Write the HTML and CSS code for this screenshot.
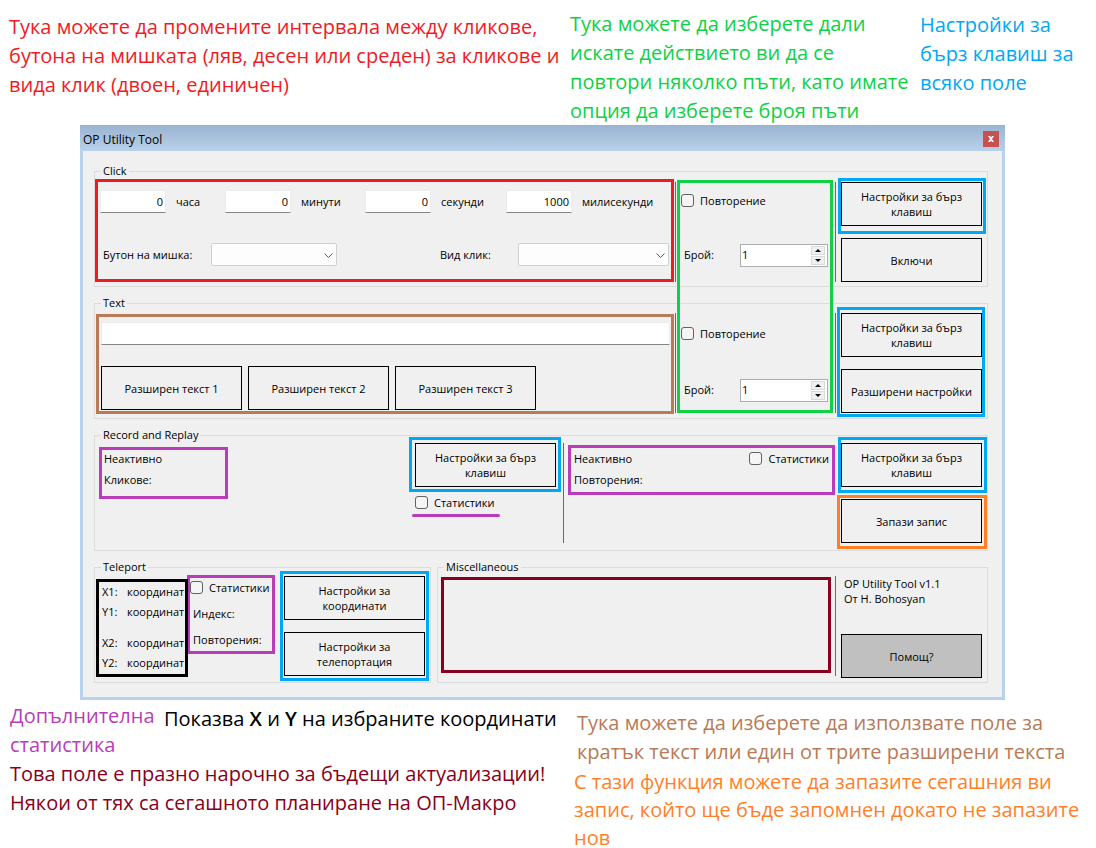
FILE: index.html
```html
<!DOCTYPE html>
<html lang="bg">
<head>
<meta charset="utf-8">
<meta name="viewport" content="width=device-width, initial-scale=1">
<title>OP Utility Tool</title>
<link rel="stylesheet" href="styles.css">
</head>
<body>
<header class="notes notes-top">
  <p class="note red">Тука можете да промените интервала между кликове,<br>бутона на мишката (ляв, десен или среден) за кликове и<br>вида клик (двоен, единичен)</p>
  <p class="note green">Тука можете да изберете дали<br>искате действието ви да се<br>повтори няколко пъти, като имате<br>опция да изберете броя пъти</p>
  <p class="note blue">Настройки за<br>бърз клавиш за<br>всяко поле</p>
</header>

<main class="window">
  <div class="titlebar">
    <h1 class="title">OP Utility Tool</h1>
    <button class="close" type="button" aria-label="Close">
      <svg width="6" height="6" viewBox="0 0 6 6" aria-hidden="true"><path d="M0 0h2l1 1.5L4 0h2L4 3l2 3H4L3 4.500 2 6H0l2-3z" fill="#fff"/></svg>
    </button>
  </div>

  <form class="content">
    <fieldset class="group">
      <legend>Click</legend>
      <div class="panel panel-click">
        <div class="main click-main">
          <div class="times">
            <label class="time"><input class="field number" type="text" value="0"><span>часа</span></label>
            <label class="time"><input class="field number" type="text" value="0"><span>минути</span></label>
            <label class="time"><input class="field number" type="text" value="0"><span>секунди</span></label>
            <label class="time"><input class="field number" type="text" value="1000"><span>милисекунди</span></label>
          </div>
          <div class="choices">
            <label class="choice-label" for="mouse">Бутон на мишка:</label>
            <span class="combo"><select id="mouse"><option></option></select><svg class="chevron" viewBox="0 0 9 5" aria-hidden="true"><path d="M.5.5l4 4 4-4"/></svg></span>
            <label class="kind-label" for="kind">Вид клик:</label>
            <span class="combo"><select id="kind"><option></option></select><svg class="chevron" viewBox="0 0 9 5" aria-hidden="true"><path d="M.5.5l4 4 4-4"/></svg></span>
          </div>
        </div>
        <div class="rule"></div>
        <div class="repeat repeat-click">
          <label class="check"><input type="checkbox"><span>Повторение</span></label>
          <div class="count">
            <label for="count1">Брой:</label>
            <span class="spinner"><input id="count1" type="text" value="1"><span class="steps"><button type="button" aria-label="+"><svg viewBox="0 0 6 3" aria-hidden="true"><path d="M0 3l3-3 3 3z"/></svg></button><button type="button" aria-label="-"><svg viewBox="0 0 6 3" aria-hidden="true"><path d="M0 0l3 3 3-3z"/></svg></button></span></span>
          </div>
        </div>
        <div class="rule"></div>
        <div class="side">
          <button class="btn" type="button">Настройки за бърз клавиш</button>
          <button class="btn" type="button">Включи</button>
        </div>
      </div>
    </fieldset>

    <fieldset class="group">
      <legend>Text</legend>
      <div class="panel panel-text">
        <div class="main text-main">
          <input class="field" type="text" aria-label="Text">
          <div class="texts">
            <button class="btn" type="button">Разширен текст 1</button>
            <button class="btn" type="button">Разширен текст 2</button>
            <button class="btn" type="button">Разширен текст 3</button>
          </div>
        </div>
        <div class="rule"></div>
        <div class="repeat repeat-text">
          <label class="check"><input type="checkbox"><span>Повторение</span></label>
          <div class="count">
            <label for="count2">Брой:</label>
            <span class="spinner"><input id="count2" type="text" value="1"><span class="steps"><button type="button" aria-label="+"><svg viewBox="0 0 6 3" aria-hidden="true"><path d="M0 3l3-3 3 3z"/></svg></button><button type="button" aria-label="-"><svg viewBox="0 0 6 3" aria-hidden="true"><path d="M0 0l3 3 3-3z"/></svg></button></span></span>
          </div>
        </div>
        <div class="rule"></div>
        <div class="side">
          <button class="btn" type="button">Настройки за бърз клавиш</button>
          <button class="btn" type="button">Разширени настройки</button>
        </div>
      </div>
    </fieldset>

    <fieldset class="group">
      <legend>Record and Replay</legend>
      <div class="panel panel-record">
        <div class="status">
          <span>Неактивно</span>
          <span>Кликове:</span>
        </div>
        <div class="record-tools">
          <button class="btn" type="button">Настройки за бърз клавиш</button>
          <label class="check"><input type="checkbox"><span>Статистики</span></label>
        </div>
        <div class="rule"></div>
        <div class="replay">
          <div class="status">
            <span>Неактивно</span>
            <span>Повторения:</span>
          </div>
          <label class="check"><input type="checkbox"><span>Статистики</span></label>
        </div>
        <div class="side">
          <button class="btn" type="button">Настройки за бърз клавиш</button>
          <button class="btn" type="button">Запази запис</button>
        </div>
      </div>
    </fieldset>

    <div class="bottom">
      <fieldset class="group">
        <legend>Teleport</legend>
        <div class="panel panel-teleport">
          <dl class="coords">
            <dt>X1:</dt><dd>координат</dd>
            <dt>Y1:</dt><dd>координат</dd>
            <dt class="second">X2:</dt><dd class="second">координат</dd>
            <dt>Y2:</dt><dd>координат</dd>
          </dl>
          <div class="stats">
            <label class="check"><input type="checkbox"><span>Статистики</span></label>
            <span>Индекс:</span>
            <span>Повторения:</span>
          </div>
          <div class="side">
            <button class="btn two-line" type="button">Настройки за координати</button>
            <button class="btn two-line" type="button">Настройки за телепортация</button>
          </div>
        </div>
      </fieldset>

      <fieldset class="group">
        <legend>Miscellaneous</legend>
        <div class="panel panel-misc">
          <div></div>
          <div class="rule"></div>
          <div class="about">
            <p>OP Utility Tool v1.1<br>От H. Bohosyan</p>
            <button class="btn help" type="button">Помощ?</button>
          </div>
        </div>
      </fieldset>
    </div>
  </form>

  <div class="marks" aria-hidden="true">
    <i class="mark red m-click"></i>
    <i class="mark green m-repeat"></i>
    <i class="mark blue m-key1"></i>
    <i class="mark brown m-text"></i>
    <i class="mark blue m-key2"></i>
    <i class="mark purple m-status"></i>
    <i class="mark blue m-key3"></i>
    <i class="mark purple m-line"></i>
    <i class="mark purple m-replay"></i>
    <i class="mark blue m-key4"></i>
    <i class="mark orange m-save"></i>
    <i class="mark purple m-stats"></i>
    <i class="mark black m-coords"></i>
    <i class="mark blue m-key5"></i>
    <i class="mark maroon m-misc"></i>
  </div>
</main>

<footer class="notes notes-bottom">
  <div class="left-notes">
    <p class="note purple">Допълнителна<br>статистика</p>
    <p class="note black">Показва <b>X</b> и <b>Y</b> на избраните координати</p>
    <p class="note maroon">Това поле е празно нарочно за бъдещи актуализации!<br>Някои от тях са сегашното планиране на ОП-Макро</p>
  </div>
  <div class="right-notes">
    <p class="note brown">Тука можете да изберете да използвате поле за<br>кратък текст или един от трите разширени текста</p>
    <p class="note orange">С тази функция можете да запазите сегашния ви<br>запис, който ще бъде запомнен докато не запазите<br>нов</p>
  </div>
</footer>
</body>
</html>
```
FILE: styles.css
```css
* { box-sizing: border-box; }

body {
  margin: 0;
  background: #fff;
  color: #000;
  font: 11px/15px "Open Sans", "Noto Sans", sans-serif;
}

p, h1, dl, dd { margin: 0; }
button, input, select { font: inherit; color: inherit; margin: 0; }

.red { color: #ed1c24; }
.green { color: #0ed145; }
.blue { color: #00a8f3; }
.brown { color: #b97a56; }
.purple { color: #b83dba; }
.orange { color: #ff7f27; }
.maroon { color: #88001b; }
.black { color: #000; }

/* Notes around the window */
.notes { display: grid; }
.note { font-size: 20px; line-height: 29px; white-space: nowrap; }
.note b { font-weight: 600; }
.notes-top { grid-template-columns: 561px 350px 1fr; padding: 9px 0 0 9px; }
.notes-top .red { padding-top: 3px; }
.notes-top .blue { padding-top: 1px; }
.notes-bottom { grid-template-columns: 564px 1fr; padding-left: 10px; }
.left-notes { display: grid; grid-template-columns: 154px 1fr; align-content: start; padding-top: 1px; }
.left-notes .black { padding-top: 3px; }
.left-notes .maroon { grid-column: 1 / -1; }
.right-notes { padding-top: 8px; }
.right-notes .brown { padding-left: 3px; }
.right-notes .orange { line-height: 28px; padding-top: 2px; }

/* Window */
.window {
  position: relative;
  margin: 0 91px 0 80px;
  border: solid #b9d1ea;
  border-width: 0 3px 3px;
  background: #f0f0f0;
}
.titlebar {
  display: flex;
  align-items: center;
  justify-content: space-between;
  height: 26px;
  margin: 0 -3px;
  padding: 2px 6px 0 3px;
  background: linear-gradient(#99b4d1, #b9d1ea);
}
.title { font-size: 12px; font-weight: 400; }
.close {
  display: grid;
  place-items: center;
  width: 16px;
  height: 16px;
  padding: 0;
  border: 0;
  background: #c75050;
}
.content { display: grid; gap: 8px; padding: 12px 14px 14px 11px; }

/* Groups */
.group { min-width: 0; margin: 0; padding: 0; border: 1px solid #dcdcdc; }
.group legend { height: 16px; margin-left: 6px; padding: 0 2px; }
.panel { display: grid; height: 107px; }
.rule { width: 1px; height: 100px; background: #696969; }
.panel-click, .panel-text { grid-template-columns: 1fr 1px 159px 1px 151px; }
.panel-click { padding-top: 3px; }
.panel-text { padding-top: 2px; }
.side { display: grid; align-content: start; gap: 12px; padding: 0 5px; }
.btn {
  width: 141px;
  height: 44px;
  padding: 0 8px;
  border: 1px solid #000;
  border-radius: 0;
  background: #f0f0f0;
  line-height: 15px;
}
.two-line { padding: 0 24px; }

/* Fields */
.field {
  height: 23px;
  padding: 0 2px;
  border: 1px solid #ececec;
  border-bottom-color: #868686;
  border-radius: 1px;
  background: #fff;
}
.number { width: 66px; text-align: right; }
.click-main { padding: 8px 5px 0; }
.times { display: grid; grid-template-columns: 125px 140px 141px 1fr; }
.time { display: flex; align-items: center; gap: 10px; }
.choices { display: grid; grid-template-columns: 108px 126px 103px 78px 1fr; align-items: center; padding: 30px 1px 0 3px; }
.choice-label { grid-column: 1; }
.kind-label { grid-column: 4; }
.combo { position: relative; display: grid; }
.combo select {
  appearance: none;
  width: 100%;
  height: 23px;
  border: 1px solid #d0d0d0;
  border-radius: 2px;
  background: #fdfdfd;
}
.chevron {
  position: absolute;
  top: 10px;
  right: 4px;
  width: 9px;
  height: 5px;
  fill: none;
  stroke: #5c5c5c;
}
.text-main { padding: 9px 5px 0 6px; }
.text-main .field { display: block; width: 100%; }
.texts { display: flex; gap: 6px; padding-top: 21px; }

.check { display: flex; align-items: center; gap: 6px; height: 15px; white-space: nowrap; }
.check input {
  appearance: none;
  width: 13px;
  height: 13px;
  border: 1px solid #626262;
  border-radius: 3px;
  background: #f5f5f5;
}
.repeat { display: grid; align-content: start; padding: 0 7px 0 5px; }
.repeat-click { padding-top: 11px; gap: 36px; }
.repeat-text { padding-top: 13px; gap: 38px; }
.count { display: grid; grid-template-columns: 56px minmax(0, 1fr); align-items: center; padding-left: 3px; }
.count label { padding-bottom: 3px; }
.spinner { display: flex; height: 23px; padding-right: 1px; border: 1px solid #abadb3; background: #fff; }
.spinner input { flex: 1; width: 0; min-width: 0; padding: 0 0 3px 1px; border: 0; background: none; }
.steps { display: grid; gap: 1px; width: 15px; padding: 1px 1px 0 0; align-content: start; }
.steps button {
  display: grid;
  place-items: center;
  height: 9px;
  padding: 0;
  border: 1px solid #dadada;
  background: #f0f0f0;
}
.steps svg { width: 6px; height: 3px; }

/* Record and replay */
.panel-record { grid-template-columns: 1fr 148px 1px 272px 151px; }
.status { display: grid; align-content: start; gap: 6px; padding: 8px 0 0 9px; }
.record-tools { display: grid; align-content: start; gap: 8px; }
.replay { display: flex; justify-content: space-between; align-items: start; padding: 0 7px 0 1px; }
.replay .check { margin-top: 8px; }

/* Bottom row */
.bottom { display: grid; grid-template-columns: 337px 1fr; gap: 6px; }
.panel-teleport { grid-template-columns: 95px 89px 151px; padding-top: 1px; }
.coords {
  display: grid;
  grid-template-columns: 25px 1fr;
  align-content: start;
  row-gap: 5px;
  padding: 8px 0 0 7px;
}
.coords dd { white-space: nowrap; }
.coords .second { margin-top: 11px; }
.stats { display: grid; align-content: start; padding-top: 4px; }
.stats > span { padding: 11px 0 0 3px; }
.panel-misc { grid-template-columns: 1fr 1px 151px; padding-top: 1px; }
.about { display: grid; align-content: start; gap: 28px; padding: 0 5px; }
.about p { padding-left: 3px; }
.help { background: #c0c0c0; }

/* Coloured frames laid over the window */
.marks { position: absolute; inset: 0; pointer-events: none; }
.mark { position: absolute; border: 3px solid currentColor; }
.m-click { left: 12px; right: 328px; top: 54px; height: 103px; }
.m-repeat { right: 169px; width: 156px; top: 55px; height: 233px; }
.m-key1 { right: 16px; width: 148px; top: 53px; height: 56px; }
.m-text { left: 13px; right: 328px; top: 189px; height: 100px; }
.m-key2 { right: 17px; width: 148px; top: 182px; height: 110px; }
.m-status { left: 16px; width: 129px; top: 322px; height: 52px; }
.m-key3 { right: 441px; width: 152px; top: 312px; height: 55px; }
.m-line { right: 502px; width: 88px; top: 389px; height: 3px; border-width: 3px 0 0; border-radius: 2px; }
.m-replay { right: 167px; width: 267px; top: 320px; height: 50px; }
.m-key4 { right: 15px; width: 149px; top: 312px; height: 56px; }
.m-save { right: 15px; width: 150px; top: 370px; height: 54px; }
.m-coords { left: 13px; width: 92px; top: 454px; height: 98px; }
.m-stats { left: 104px; width: 88px; top: 450px; height: 79px; }
.m-key5 { left: 197px; width: 149px; top: 446px; height: 110px; }
.m-misc { left: 358px; right: 171px; top: 452px; height: 96px; }
```
